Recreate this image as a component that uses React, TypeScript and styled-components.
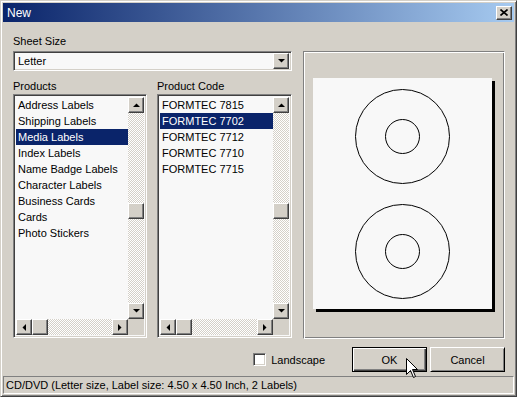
import React from "react";
import styled, { createGlobalStyle } from "styled-components";

const GlobalStyle = createGlobalStyle`
  html, body {
    margin: 0;
    padding: 0;
    background: #d4d0c8;
  }
  body {
    font-family: "Liberation Sans", Arial, sans-serif;
    font-size: 11px;
    color: #000;
  }
`;

const face = "#d4d0c8";
const sunken = `
  border-style: solid;
  border-width: 1px;
  border-color: #808080 #ffffff #ffffff #808080;
  box-shadow: inset 1px 1px 0 #404040, inset -1px -1px 0 #d4d0c8;
`;
const raised = `
  border-style: solid;
  border-width: 1px;
  border-color: #ffffff #404040 #404040 #ffffff;
  box-shadow: inset -1px -1px 0 #808080, inset 1px 1px 0 #d4d0c8;
`;

const Window = styled.div`
  position: relative;
  width: 517px;
  height: 397px;
  box-sizing: border-box;
  background: ${face};
  border-style: solid;
  border-width: 1px;
  border-color: ${face} #404040 #404040 ${face};
  box-shadow: inset 1px 1px 0 #fff, inset -1px -1px 0 #808080;
  padding: 2px;
  display: flex;
  flex-direction: column;
  overflow: hidden;
`;

const TitleBar = styled.div`
  height: 19px;
  display: flex;
  align-items: center;
  justify-content: space-between;
  padding: 0 2px 0 4px;
  background: linear-gradient(to right, #0a246a, #a6caf0);
  color: #fff;
  font-size: 12px;
`;

const CloseButton = styled.div`
  width: 16px;
  height: 14px;
  box-sizing: border-box;
  ${raised}
  background: ${face};
  display: flex;
  align-items: center;
  justify-content: center;
`;

const Body = styled.div`
  flex: 1;
  display: flex;
  flex-direction: column;
  padding: 13px 9px 0 10px;
`;

const Main = styled.div`
  display: flex;
  gap: 11px;
`;

const LeftColumn = styled.div`
  width: 279px;
  display: flex;
  flex-direction: column;
`;

const Label = styled.div`
  height: 13px;
  line-height: 13px;
  margin-bottom: ${(p: { $gap?: number }) => p.$gap ?? 3}px;
`;

const Combo = styled.div`
  height: 20px;
  box-sizing: border-box;
  ${sunken}
  background: #f8f8f8;
  display: flex;
  align-items: center;
  padding: 2px;
  margin-bottom: 9px;
`;

const ComboText = styled.div`
  flex: 1;
  padding-left: 2px;
`;

const ScrollBtn = styled.div`
  width: 16px;
  height: 16px;
  flex: none;
  box-sizing: border-box;
  ${raised}
  background: ${face};
  display: flex;
  align-items: center;
  justify-content: center;
`;

const ListsRow = styled.div`
  display: flex;
  gap: 10px;
`;

const ListCol = styled.div<{ $w: number }>`
  width: ${(p) => p.$w}px;
  display: flex;
  flex-direction: column;
`;

const ListBox = styled.div`
  height: 244px;
  box-sizing: border-box;
  ${sunken}
  padding: 2px;
  background: #f8f8f8;
  display: grid;
  grid-template-columns: 1fr 16px;
  grid-template-rows: 1fr 16px;
`;

const Items = styled.div`
  overflow: hidden;
`;

const Item = styled.div<{ $sel?: boolean }>`
  height: 16px;
  line-height: 16px;
  padding-left: 2px;
  white-space: nowrap;
  background: ${(p) => (p.$sel ? "#0a246a" : "transparent")};
  color: ${(p) => (p.$sel ? "#fff" : "#000")};
`;

const checker = `
  background-color: ${face};
  background-image: conic-gradient(#fff 25%, ${face} 0 50%, #fff 0 75%, ${face} 0);
  background-size: 2px 2px;
`;

const VScroll = styled.div`
  display: flex;
  flex-direction: column;
  ${checker}
`;

const Track = styled.div`
  flex: 1;
  display: flex;
  flex-direction: column;
`;

const VThumb = styled(ScrollBtn)<{ $top: number }>`
  margin-top: ${(p) => p.$top}px;
`;

const HScroll = styled.div`
  display: flex;
  ${checker}
`;

const HFill = styled.div`
  flex: 1;
`;

const Corner = styled.div`
  background: ${face};
`;

const PreviewGroup = styled.div`
  width: 202px;
  height: 288px;
  margin-top: 16px;
  box-sizing: border-box;
  border-style: solid;
  border-width: 1px;
  border-color: #808080 #ffffff #ffffff #808080;
  box-shadow: inset 1px 1px 0 #fff, inset -1px -1px 0 #808080;
  display: flex;
  align-items: center;
  justify-content: center;
  padding: 0 3px 3px 0;
`;

const Paper = styled.div`
  width: 179px;
  height: 231px;
  background: #f8f8f8;
  box-shadow: 3px 3px 0 #000;
  display: flex;
`;

const Footer = styled.div`
  display: flex;
  align-items: center;
  justify-content: flex-end;
  height: 25px;
  margin-top: 8px;
`;

const CheckRow = styled.label`
  display: flex;
  align-items: center;
  gap: 5px;
  margin-right: 27px;
`;

const CheckBox = styled.div`
  width: 13px;
  height: 13px;
  box-sizing: border-box;
  ${sunken}
  background: #fff;
`;

const Button = styled.div<{ $default?: boolean }>`
  width: 75px;
  height: 25px;
  box-sizing: border-box;
  background: ${face};
  display: flex;
  align-items: center;
  justify-content: center;
  font-size: 11px;
  border: 1px solid ${(p) => (p.$default ? "#000" : "#fff")};
  border-right-color: #000;
  border-bottom-color: #000;
  box-shadow: ${(p) =>
    p.$default
      ? "inset 1px 1px 0 #fff, inset -1px -1px 0 #404040, inset -2px -2px 0 #808080"
      : "inset 1px 1px 0 #d4d0c8, inset -1px -1px 0 #808080"};
  & + & {
    margin-left: 3px;
  }
`;

const StatusBar = styled.div`
  height: 18px;
  box-sizing: border-box;
  border-style: solid;
  border-width: 1px;
  border-color: #808080 #ffffff #ffffff #808080;
  display: flex;
  align-items: center;
  padding: 0 3px 0 2px;
  font-size: 11px;
  white-space: nowrap;
`;

const Cursor = styled.svg`
  position: absolute;
  left: 405px;
  top: 357px;
`;

const Arrow = ({ dir }: { dir: "up" | "down" | "left" | "right" }) => {
  const pts = {
    up: "0,4 7,4 3.5,0.5",
    down: "0,0 7,0 3.5,3.5",
    left: "4,0 4,7 0.5,3.5",
    right: "0,0 0,7 3.5,3.5",
  }[dir];
  const vertical = dir === "up" || dir === "down";
  return (
    <svg width={vertical ? 7 : 4} height={vertical ? 4 : 7} viewBox={vertical ? "0 0 7 4" : "0 0 4 7"}>
      <polygon points={pts} fill="#000" />
    </svg>
  );
};

type ListProps = { width: number; label: string; items: string[]; selected: number };

const List = ({ width, label, items, selected }: ListProps) => (
  <ListCol $w={width}>
    <Label $gap={1}>{label}</Label>
    <ListBox>
      <Items>
        {items.map((it, i) => (
          <Item key={it} $sel={i === selected}>
            {it}
          </Item>
        ))}
      </Items>
      <VScroll>
        <ScrollBtn>
          <Arrow dir="up" />
        </ScrollBtn>
        <Track>
          <VThumb $top={90} />
        </Track>
        <ScrollBtn>
          <Arrow dir="down" />
        </ScrollBtn>
      </VScroll>
      <HScroll>
        <ScrollBtn>
          <Arrow dir="left" />
        </ScrollBtn>
        <ScrollBtn />
        <HFill />
        <ScrollBtn>
          <Arrow dir="right" />
        </ScrollBtn>
      </HScroll>
      <Corner />
    </ListBox>
  </ListCol>
);

const products = [
  "Address Labels",
  "Shipping Labels",
  "Media Labels",
  "Index Labels",
  "Name Badge Labels",
  "Character Labels",
  "Business Cards",
  "Cards",
  "Photo Stickers",
];

const codes = ["FORMTEC 7815", "FORMTEC 7702", "FORMTEC 7712", "FORMTEC 7710", "FORMTEC 7715"];

export default function App() {
  return (
    <>
      <GlobalStyle />
      <Window>
        <TitleBar>
          <span>New</span>
          <CloseButton>
            <svg width="8" height="7" viewBox="0 0 8 7">
              <path d="M0.5 0.5 L7.5 6.5 M7.5 0.5 L0.5 6.5" stroke="#000" strokeWidth="1.6" />
            </svg>
          </CloseButton>
        </TitleBar>
        <Body>
          <Main>
            <LeftColumn>
              <Label>Sheet Size</Label>
              <Combo>
                <ComboText>Letter</ComboText>
                <ScrollBtn>
                  <Arrow dir="down" />
                </ScrollBtn>
              </Combo>
              <ListsRow>
                <List width={134} label="Products" items={products} selected={2} />
                <List width={135} label="Product Code" items={codes} selected={1} />
              </ListsRow>
            </LeftColumn>
            <PreviewGroup>
              <Paper>
                <svg width="179" height="231" viewBox="0 0 179 231">
                  <g fill="none" stroke="#000" strokeWidth="1">
                    <circle cx="89.5" cy="58.5" r="47" />
                    <circle cx="89.5" cy="58.5" r="17" />
                    <circle cx="89.5" cy="173.5" r="47" />
                    <circle cx="89.5" cy="173.5" r="17" />
                  </g>
                </svg>
              </Paper>
            </PreviewGroup>
          </Main>
          <Footer>
            <CheckRow>
              <CheckBox />
              <span>Landscape</span>
            </CheckRow>
            <Button $default>OK</Button>
            <Button>Cancel</Button>
          </Footer>
        </Body>
        <StatusBar>CD/DVD (Letter size, Label size: 4.50 x 4.50 Inch, 2 Labels)</StatusBar>
        <Cursor width="13" height="21" viewBox="0 0 13 21">
          <polygon
            points="0.5,0.5 0.5,16.5 4.5,12.5 7.5,19.5 9.5,18.5 6.5,11.5 11.5,11.5"
            fill="#fff"
            stroke="#000"
            strokeWidth="1"
          />
        </Cursor>
      </Window>
    </>
  );
}
